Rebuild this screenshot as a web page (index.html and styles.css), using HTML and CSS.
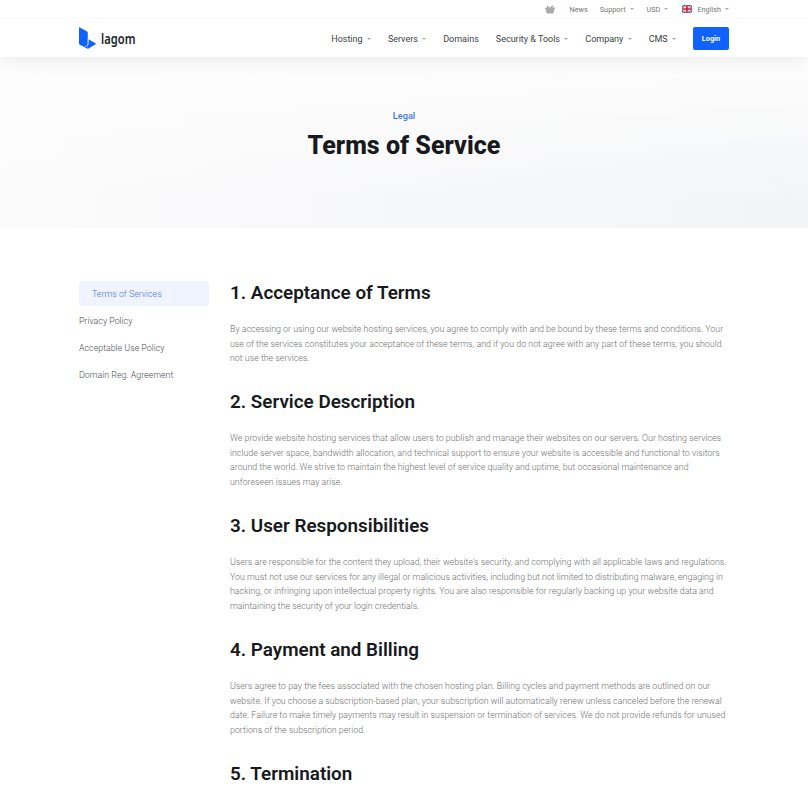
FILE: index.html
```html
<!DOCTYPE html>
<html lang="en">
<head>
<meta charset="utf-8">
<title>Terms of Service - Lagom</title>
<link rel="stylesheet" href="styles.css">
</head>
<body>
<header class="header">
  <div class="topbar">
    <div class="container topbar-inner">
      <svg class="basket" viewBox="0 0 10 9"><path d="M0 2.4 1.8 3 2 .6l1 .2 1.4 2L7.8.2l.9.6L7.4 2.6 10 2.4v1.3h-.5L8.7 7.7Q8.5 8.4 7.8 8.4H2.4q-.7 0-.9-.7L.6 4 0 3.6z"/></svg>
      <a class="news">News</a>
      <a class="support drop">Support</a>
      <a class="currency drop">USD</a>
      <a class="language drop"><svg class="flag" viewBox="0 0 20 16"><path fill="#1c2a6b" d="M0 0h20v16H0z"/><path stroke="#fff" stroke-width="2.6" d="m0 0 20 16M20 0 0 16"/><path stroke="#d52b42" stroke-width="1" d="m0 0 20 16M20 0 0 16"/><path stroke="#fff" stroke-width="6" d="M10 0v16M0 8h20"/><path stroke="#d0182f" stroke-width="3.2" d="M10 0v16M0 8h20"/></svg>English</a>
    </div>
  </div>
  <div class="container navbar">
    <a class="brand"><svg class="mark" viewBox="0 0 17 22"><path fill="#1062fe" d="M0 .8Q0 0 .8.4L7.7 4.2Q8.8 4.8 8.8 6v15.3Q8.8 22 8 21.5L.8 17.7Q0 17.2 0 16.4z"/><path fill="#1062fe" d="m9.4 12.2 7.1 4.1q.7.5 0 1l-7.7 4.6z"/><path fill="none" stroke="#fff" stroke-width=".6" d="M9.1 11.8v5.8l-3.6 2.5"/></svg><span class="wordmark">lagom</span></a>
    <nav class="nav">
      <a class="drop">Hosting</a>
      <a class="drop">Servers</a>
      <a>Domains</a>
      <a class="drop">Security &amp; Tools</a>
      <a class="drop">Company</a>
      <a class="drop">CMS</a>
      <a class="login">Login</a>
    </nav>
  </div>
</header>
<section class="hero">
  <p>Legal</p>
  <h1>Terms of Service</h1>
</section>
<main class="container content">
  <aside class="side">
    <a class="active">Terms of Services</a>
    <a>Privacy Policy</a>
    <a>Acceptable Use Policy</a>
    <a>Domain Reg. Agreement</a>
  </aside>
  <article class="terms">
    <h2>1. Acceptance of Terms</h2>
    <p>By accessing or using our website hosting services, you agree to comply with and be bound by these terms and conditions. Your<br>use of the services constitutes your acceptance of these terms, and if you do not agree with any part of these terms, you should<br>not use the services.</p>
    <h2>2. Service Description</h2>
    <p>We provide website hosting services that allow users to publish and manage their websites on our servers. Our hosting services<br>include server space, bandwidth allocation, and technical support to ensure your website is accessible and functional to visitors<br>around the world. We strive to maintain the highest level of service quality and uptime, but occasional maintenance and<br>unforeseen issues may arise.</p>
    <h2>3. User Responsibilities</h2>
    <p>Users are responsible for the content they upload, their website's security, and complying with all applicable laws and regulations.<br>You must not use our services for any illegal or malicious activities, including but not limited to distributing malware, engaging in<br>hacking, or infringing upon intellectual property rights. You are also responsible for regularly backing up your website data and<br>maintaining the security of your login credentials.</p>
    <h2>4. Payment and Billing</h2>
    <p>Users agree to pay the fees associated with the chosen hosting plan. Billing cycles and payment methods are outlined on our<br>website. If you choose a subscription-based plan, your subscription will automatically renew unless canceled before the renewal<br>date. Failure to make timely payments may result in suspension or termination of services. We do not provide refunds for unused<br>portions of the subscription period.</p>
    <h2>5. Termination</h2>
  </article>
</main>
</body>
</html>
```

FILE: styles.css
```css
* { box-sizing: border-box; }
html { overflow: hidden; }
body { margin: 0; height: 800px; overflow: hidden; background: #fff; color: #17191c; font-family: Roboto, sans-serif; }
.container { width: 650px; margin: 0 auto; }
.header { position: relative; height: 57px; background: #fff; box-shadow: 0 0 18px rgba(0, 0, 0, .1); }
.topbar { height: 19px; border-bottom: 1px solid #f8f8f8; }
.topbar-inner { display: flex; align-items: center; justify-content: flex-end; height: 18px; color: #777; font-size: 7.3px; white-space: nowrap; }
.basket { width: 10px; height: 9px; margin-right: 14px; fill: #aaa; }
.drop { display: flex; align-items: center; }
.drop::after { content: ""; margin-left: 4px; border: 2px solid transparent; border-top-color: #aaa; border-bottom: 0; }
.news { margin-right: 12px; }
.support { margin-right: 13px; }
.currency { margin-right: 14px; }
.flag { width: 10px; height: 8px; margin-right: 5px; }
.navbar { display: flex; align-items: center; justify-content: space-between; height: 39px; }
.brand { display: flex; align-items: center; gap: 5px; width: 60px; margin-top: -1px; color: #22262b; font: 600 13.5px "Noto Sans", sans-serif; }
.wordmark { margin-top: 1px; transform: scaleX(.83); transform-origin: left; }
.mark { flex: none; width: 17px; height: 22px; }
.nav { display: flex; align-items: center; gap: 17px; color: #404245; font-size: 9px; white-space: nowrap; }
.nav .drop::after { margin-left: 4.3px; }
.login { width: 36px; height: 23px; border-radius: 2px; background: #1062fe; color: #fff; font-size: 7.3px; font-weight: 700; line-height: 23px; text-align: center; }
.hero { height: 171px; padding-top: 52px; text-align: center; background: linear-gradient(180deg, #fdfdfd 0%, rgba(253, 253, 253, 0) 85%), linear-gradient(90deg, #fbfbfc, #f3f4f6); }
.hero p { margin: 0; color: #3e76f2; font-size: 9.2px; font-weight: 500; line-height: 14px; }
.hero h1 { margin: 7px 0 0; font-size: 25.1px; font-weight: 800; line-height: 32px; }
.content { display: flex; gap: 21px; padding-top: 53px; }
.side { display: flex; flex-direction: column; gap: 2px; width: 130px; color: #4b4d50; font-size: 8.85px; font-weight: 300; }
.side a { height: 25px; padding-top: 1px; line-height: 25px; white-space: nowrap; }
.side .active { padding-left: 13px; border-radius: 4px; background: #f0f4ff; color: #4770ef; }
.terms { width: 499px; }
.terms h2 { margin: 0; font-size: 18.85px; font-weight: 600; line-height: 24px; white-space: nowrap; }
.terms p { margin: 17px 0 24.5px; color: #6f6f6f; font-size: 8.85px; font-weight: 300; line-height: 14.6px; white-space: nowrap; }
```
